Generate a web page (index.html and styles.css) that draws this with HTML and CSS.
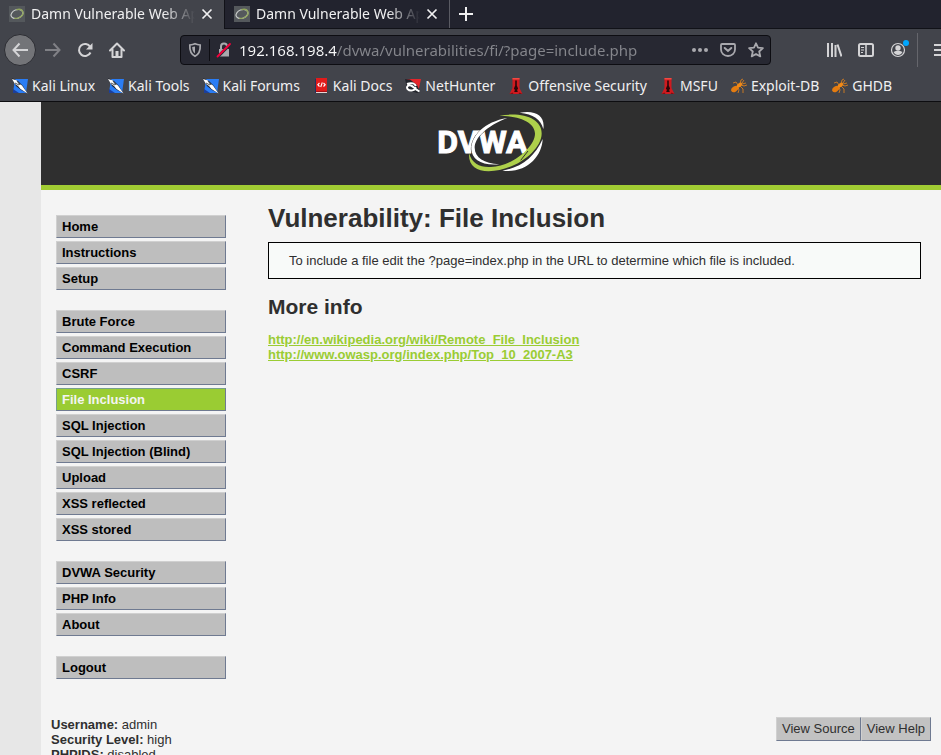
FILE: index.html
```html
<!DOCTYPE html>
<html lang="en">
<head>
<meta charset="utf-8">
<title>Damn Vulnerable Web App</title>
<link rel="stylesheet" href="styles.css">
</head>
<body>
<svg class="defs" aria-hidden="true">
  <symbol id="favicon" viewBox="0 0 16 16">
    <path fill="#54585c" d="M0 0h16v16H0z"/>
    <g transform="rotate(-22 8 8)" fill="none">
      <ellipse cx="8" cy="8" rx="6.2" ry="4.2" stroke="#c9cccb" stroke-width="1.1"/>
      <path d="M9 3.800c7 .6 7 8 0 8.400-2 .2-4-.4-5-1.400" stroke="#90a55c" stroke-width="1.300"/>
    </g>
  </symbol>
  <symbol id="close" viewBox="0 0 16 16"><path d="M3.500 3.500l9 9m0-9l-9 9" stroke="currentColor" stroke-width="1.700" fill="none"/></symbol>
  <symbol id="kali" viewBox="0 0 16 16">
    <path fill="#2a7df5" d="M3 1h13l-2 14H1z"/>
    <path fill="#1c3f9c" d="M1 11l6 4H1z"/>
    <path fill="#20242c" d="M0 0l6 3 5 5 4 7-6-3-5-4z"/>
    <path fill="#fff" d="M0 1l5 1.500 2 3 3 2 5.500 8-7-4.500L6 8 3 6z"/>
    <path stroke="#20242c" stroke-width=".8" d="M5 3l3 4M3 5l4 2"/>
  </symbol>
  <symbol id="flame" viewBox="0 0 16 16">
    <path fill="#cf1a1f" d="M4.500 0h7v10l3 6h-13l3-6z"/>
    <path fill="#f04a43" d="M4.500 0h7v1.500h-7z"/>
    <path fill="#2a0709" d="M7.200 2.500h1.600v5l1.300 3-1 1.500.7 2H6.200l.7-2-1-1.500 1.300-3z"/>
    <path fill="#7d1014" d="M1.500 16l3-1.500 1 1.500zM14.500 16l-3-1.500-1 1.500z"/>
  </symbol>
  <symbol id="bug" viewBox="0 0 16 16">
    <ellipse cx="3.800" cy="11" rx="4" ry="2.600" transform="rotate(-35 3.800 11)" fill="#e57c10"/>
    <ellipse cx="8.500" cy="7" rx="3" ry="1.900" transform="rotate(-35 8.500 7)" fill="#f28a17"/>
    <path stroke="#e8851b" stroke-width=".8" fill="none" d="M11 6l4-1M9 6l1-4 2-1M7 7L5 4 2 5M10 7l3 1 3-1M9 8l3 3v4M7 9l1 3-1 3M11 5l2-3"/>
  </symbol>
</svg>

<div class="browser">
  <div class="tabs">
    <div class="tab tab-active">
      <svg class="icon"><use href="#favicon"/></svg>
      <button class="tab-title">Damn Vulnerable Web App</button>
      <button class="tab-close" aria-label="Close tab"><svg class="icon"><use href="#close"/></svg></button>
    </div>
    <div class="tab">
      <svg class="icon"><use href="#favicon"/></svg>
      <button class="tab-title">Damn Vulnerable Web App</button>
      <button class="tab-close" aria-label="Close tab"><svg class="icon"><use href="#close"/></svg></button>
    </div>
    <button class="new-tab" aria-label="New tab"><svg class="icon" viewBox="0 0 16 16"><path d="M8 1v14M1 8h14" stroke="currentColor" stroke-width="2"/></svg></button>
  </div>

  <div class="toolbar">
    <div class="nav-buttons">
      <button class="back" aria-label="Back"><svg class="icon" viewBox="0 0 16 16"><path d="M7.500 1.500L1.500 8l6 6.500M1.500 8H16" stroke="currentColor" stroke-width="2" fill="none"/></svg></button>
      <button class="forward" aria-label="Forward"><svg class="icon" viewBox="0 0 16 16"><path d="M8.500 1.500l6 6.500-6 6.500M14.500 8H0" stroke="currentColor" stroke-width="2" fill="none"/></svg></button>
      <button aria-label="Reload"><svg class="icon" viewBox="0 0 16 16"><path d="M13.200 5A6 6 0 1 0 13.500 10.500" stroke="currentColor" stroke-width="2" fill="none"/><path d="M15.500 1v6.500H9z" fill="currentColor"/></svg></button>
      <button aria-label="Home"><svg class="icon" viewBox="0 0 16 16"><path d="M1 8.500L8 1.500l7 7M3.500 7.500V15h9V7.500" stroke="currentColor" stroke-width="2" fill="none" stroke-linejoin="round" stroke-linecap="round"/><path d="M6.500 9h3v6h-3z" fill="currentColor"/></svg></button>
    </div>
    <div class="urlbar">
      <button aria-label="Tracking protection"><svg class="icon" viewBox="0 0 16 16"><path d="M8 1.800c2 .9 4 1.100 5.200 1.200C13.500 9 11.500 12.500 8 14.300 4.500 12.500 2.500 9 2.800 3 4 2.900 6 2.700 8 1.800z" stroke="currentColor" stroke-width="1.700" fill="none"/><path d="M8 4.500v7C6 10 5.200 8 5.200 5z" fill="currentColor"/></svg></button>
      <span class="url-divider"></span>
      <button aria-label="Connection is not secure"><svg class="icon" viewBox="0 0 16 16"><path d="M3 7h10v7.500H3z" fill="currentColor"/><path d="M5 8V4.500a3 3 0 0 1 6 0V8" stroke="currentColor" stroke-width="2" fill="none"/><path d="M1.500 15L14.500 2" stroke="#272832" stroke-width="3"/><path d="M1.500 14.500L14 2" stroke="#f5003c" stroke-width="1.800" stroke-linecap="round"/></svg></button>
      <input class="url" type="text" aria-label="Address" value="192.168.198.4/dvwa/vulnerabilities/fi/?page=include.php">
      <div class="url-actions">
        <button aria-label="Page actions"><svg class="icon" viewBox="0 0 16 16" fill="currentColor"><circle cx="2" cy="8" r="2"/><circle cx="8" cy="8" r="2"/><circle cx="14" cy="8" r="2"/></svg></button>
        <button aria-label="Save to Pocket"><svg class="icon" viewBox="0 0 16 16" fill="none" stroke="currentColor" stroke-width="1.800"><path d="M2 2h12q1 0 1 1v4.500a7 6.500 0 0 1-14 0V3q0-1 1-1z"/><path d="M4.700 6L8 9l3.300-3" stroke-width="2" stroke-linecap="round"/></svg></button>
        <button aria-label="Bookmark this page"><svg class="icon" viewBox="0 0 16 16"><path d="M8 1.300l2 4.400 4.900.5-3.700 3.300 1.100 4.900L8 12l-4.300 2.400 1.100-4.900L1.100 6.200 6 5.700z" stroke="currentColor" stroke-width="1.800" stroke-linejoin="round" fill="none"/></svg></button>
      </div>
    </div>
    <div class="tools">
      <button aria-label="Library"><svg class="icon" viewBox="0 0 16 16"><path d="M2 1v14M6 1v14M9.500 3v12M11.500 2.500l4 12" stroke="currentColor" stroke-width="2"/></svg></button>
      <button aria-label="Sidebars"><svg class="icon" viewBox="0 0 16 16"><rect x="1" y="2" width="14" height="12" rx="1.500" fill="none" stroke="currentColor" stroke-width="2"/><path d="M8 2v12" stroke="currentColor" stroke-width="1.500"/><path d="M3 5.500h3M3 8h3M3 10.500h2" stroke="currentColor"/></svg></button>
      <button class="account" aria-label="Account"><svg class="icon" viewBox="0 0 16 16"><circle cx="8" cy="8" r="6.500" fill="none" stroke="currentColor" stroke-width="1.200"/><circle cx="8" cy="6" r="2.700" fill="currentColor"/><path d="M3.500 10Q8 7.500 12.500 10 11 13 8 13T3.500 10z" fill="currentColor"/></svg><span class="badge"></span></button>
      <span class="tool-divider"></span>
      <button aria-label="Menu"><svg class="icon" viewBox="0 0 16 16"><path d="M0 3h16M0 8h16M0 13h16" stroke="currentColor" stroke-width="2"/></svg></button>
    </div>
  </div>

  <nav class="bookmarks" aria-label="Bookmarks">
    <a href="#"><svg class="icon"><use href="#kali"/></svg>Kali Linux</a>
    <a href="#"><svg class="icon"><use href="#kali"/></svg>Kali Tools</a>
    <a href="#"><svg class="icon"><use href="#kali"/></svg>Kali Forums</a>
    <a href="#"><svg class="icon" viewBox="0 0 16 16"><path fill="#26315e" d="M2 1h2v14H2z"/><path fill="#e01b1b" d="M3 0h11v13H3z"/><path fill="#a80f14" d="M3 13h11v1H3z"/><path fill="#e8d5d5" d="M3 14h11v1H3z"/><path d="M6.500 5L4.800 6.700l1.700 1.800M10.500 5l1.700 1.700-1.700 1.800M9.300 4.500l-1.600 4.500" stroke="#fff" stroke-width="1.100" fill="none"/></svg>Kali Docs</a>
    <a href="#"><svg class="icon" viewBox="0 0 16 16"><path fill="#e5252b" d="M1 1h15l-2 9-3 3z"/><path fill="#22252c" d="M0 1l5 .5L12 7l3 7-3 1-6-2-4-3z"/><path d="M2 6C7 4 10 6 11 8M10.500 9c0 4-5.500 4.500-8 2-1.500-2.500 1-4.500 3.500-3.500 2.500 1 3.500 3.500 8.500 6" stroke="#fff" stroke-width="1.900" fill="none"/></svg>NetHunter</a>
    <a href="#"><svg class="icon"><use href="#flame"/></svg>Offensive Security</a>
    <a href="#"><svg class="icon"><use href="#flame"/></svg>MSFU</a>
    <a href="#"><svg class="icon"><use href="#bug"/></svg>Exploit-DB</a>
    <a href="#"><svg class="icon"><use href="#bug"/></svg>GHDB</a>
  </nav>
</div>

<div class="viewport">
  <div class="page">
    <header class="header">
      <svg class="logo" viewBox="52 40 321 186" role="img" aria-label="DVWA">
        <path fill="#fff" d="M297 45C345 36 374 54 368 94 360 64 338 50 297 45z"/>
        <path fill="#fff" d="M366 124C364 176 318 228 245 219 302 209 342 178 366 124z"/>
        <text class="logo-text" x="50" y="165">DVWA</text>
        <path fill="#fff" stroke="#2f2f2f" stroke-width="3" paint-order="stroke" d="M260 61C195 86 162 122 162 150 163 181 190 196 236 200 182 205 153 184 152 154 152 116 190 72 260 61z"/>
        <path fill="#aed04b" d="M236 54C310 42 364 65 363 108 362 158 285 219 204 221 167 221 143 204 145 167 154 198 178 210 211 208 274 206 343 148 343 108 343 77 303 55 236 54z"/>
        <path d="M322 160L300 188" stroke="#2f2f2f" stroke-width="3"/>
      </svg>
    </header>
    <div class="body">
      <nav class="menu" aria-label="Main">
        <ul>
          <li><a href="#">Home</a></li>
          <li><a href="#">Instructions</a></li>
          <li><a href="#">Setup</a></li>
        </ul>
        <ul>
          <li><a href="#">Brute Force</a></li>
          <li><a href="#">Command Execution</a></li>
          <li><a href="#">CSRF</a></li>
          <li><a class="selected" href="#" aria-current="page">File Inclusion</a></li>
          <li><a href="#">SQL Injection</a></li>
          <li><a href="#">SQL Injection (Blind)</a></li>
          <li><a href="#">Upload</a></li>
          <li><a href="#">XSS reflected</a></li>
          <li><a href="#">XSS stored</a></li>
        </ul>
        <ul>
          <li><a href="#">DVWA Security</a></li>
          <li><a href="#">PHP Info</a></li>
          <li><a href="#">About</a></li>
        </ul>
        <ul>
          <li><a href="#">Logout</a></li>
        </ul>
      </nav>
      <main class="main">
        <h1>Vulnerability: File Inclusion</h1>
        <p class="note">To include a file edit the ?page=index.php in the URL to determine which file is included.</p>
        <h2>More info</h2>
        <ul class="links">
          <li><a href="#">http://en.wikipedia.org/wiki/Remote_File_Inclusion</a></li>
          <li><a href="#">http://www.owasp.org/index.php/Top_10_2007-A3</a></li>
        </ul>
      </main>
    </div>
    <footer class="system">
      <div class="session">
        <div><b>Username:</b> admin</div>
        <div><b>Security Level:</b> high</div>
        <div><b>PHPIDS:</b> disabled</div>
      </div>
      <div class="page-buttons">
        <button>View Source</button><button>View Help</button>
      </div>
    </footer>
  </div>
</div>
</body>
</html>
```
FILE: styles.css
```css
* { box-sizing: border-box; }

body {
  margin: 0;
  height: 100vh;
  display: flex;
  flex-direction: column;
  overflow: hidden;
  background: #e7e7e7;
  font: 13px/15px "Liberation Sans", Arial, sans-serif;
  color: #2f2f2f;
}

.defs { position: absolute; width: 0; height: 0; }
.icon { display: block; width: 16px; height: 16px; flex: none; }
button { font: inherit; color: inherit; background: none; border: 0; padding: 0; }
ul { list-style: none; margin: 0; padding: 0; }

/* Browser frame */
.browser {
  flex: none;
  background: #42444b;
  border-bottom: 1px solid #0d0d10;
  color: #f0f0f1;
  font: 14px/20px "Noto Sans", sans-serif;
}

.tabs { display: flex; height: 29px; background: #22232e; border-bottom: 1px solid #111218; }
.tab {
  display: flex;
  align-items: center;
  width: 225px;
  padding: 0 9px;
  border-right: 1px solid #5a5b63;
}
.tab-active { background: #42444b; border-right-color: #111218; margin-bottom: -1px; padding-bottom: 1px; }
.tab-title {
  flex: 1;
  min-width: 0;
  margin: 0 4px 0 6px;
  overflow: hidden;
  white-space: nowrap;
  text-align: left;
  mask-image: linear-gradient(to left, transparent, #000 32px);
}
.new-tab { padding: 0 8px; }

.toolbar { display: flex; align-items: center; height: 41px; overflow: hidden; color: #d4d4d6; }
.nav-buttons { display: flex; align-items: center; gap: 16px; padding-left: 4px; }
.back {
  display: grid;
  place-items: center;
  width: 32px;
  height: 32px;
  margin-right: -7px;
  border: 1px solid #2c2d33;
  border-radius: 50%;
  background: #737478;
}
.forward { color: #808186; }

.urlbar {
  flex: 1;
  min-width: 0;
  display: flex;
  align-items: center;
  height: 30px;
  margin: 0 55px;
  padding: 0 6px;
  border: 1px solid #0d0d12;
  border-radius: 4px;
  background: #272832;
  color: #a9a9ae;
}
.url-divider { width: 1px; height: 22px; margin: 0 6px; background: #0d0d12; }
.url {
  flex: 1;
  min-width: 0;
  height: 28px;
  margin-left: 7px;
  padding: 0;
  border: 0;
  outline: 0;
  font: inherit;
  font-size: 15px;
  color: transparent;
  background: linear-gradient(to right, #f9f9fa 98px, #85868c 98px);
  -webkit-background-clip: text;
  background-clip: text;
}
.url-actions { display: flex; gap: 12px; }

.tools { display: flex; align-items: center; gap: 16px; width: 115px; }
.account { position: relative; }
.badge { position: absolute; top: -2px; right: -3px; width: 6px; height: 6px; border-radius: 50%; background: #00a7ff; }
.tool-divider { flex: none; width: 1px; height: 34px; margin-left: -5px; background: #65666c; }

.bookmarks { display: flex; gap: 13px; height: 31px; padding-left: 12px; overflow: hidden; white-space: nowrap; }
.bookmarks a { display: flex; align-items: center; gap: 4px; color: inherit; text-decoration: none; }

/* Web page */
.viewport { flex: 1; min-height: 0; overflow: hidden; padding-left: 41px; }
.page { min-height: 100%; background: #f4f4f4; }
.header { display: flex; justify-content: center; padding: 9px 0 12px; background: #2f2f2f; border-bottom: 5px solid #a1cc33; }
.logo { display: block; width: 107px; height: 62px; }
.logo-text { font: bold 96px Roboto, sans-serif; fill: #fff; stroke: #fff; stroke-width: 3px; }

.body { display: flex; gap: 42px; padding: 0 20px 0 15px; }
.menu { flex: none; display: flex; flex-direction: column; gap: 20px; width: 170px; padding-top: 25px; }
.menu ul { display: flex; flex-direction: column; gap: 3px; }
.menu a {
  display: block;
  padding: 3px 5px;
  border: 1px solid;
  border-color: #d0d0d0 #6f7a91 #6f7a91 #d0d0d0;
  background: #bebebe;
  color: #000;
  font-weight: bold;
  text-decoration: none;
}
.menu .selected { background: #9acc33; color: #f4f4f4; border-color: #77a08b #6f7a91 #6f7a91 #77a08b; }

.main { flex: 1; min-width: 0; padding-top: 13px; }
h1 { margin: 0; font-size: 26px; line-height: 30px; }
.note { margin: 9px 0 16px; padding: 10px 20px; border: 1px solid #000; background: #f8faf9; }
h2 { margin: 0 0 13px; font-size: 21px; line-height: 24px; }
.links a { color: #9acc33; font-weight: bold; }

.system { display: flex; justify-content: space-between; align-items: flex-start; padding: 38px 10px 20px; }
.page-buttons { display: flex; }
.page-buttons button {
  padding: 3px 5px 4px;
  border: 1px solid;
  border-color: #d0d0d0 #6f7a91 #6f7a91 #d0d0d0;
  background: #c2c2c2;
}
```
